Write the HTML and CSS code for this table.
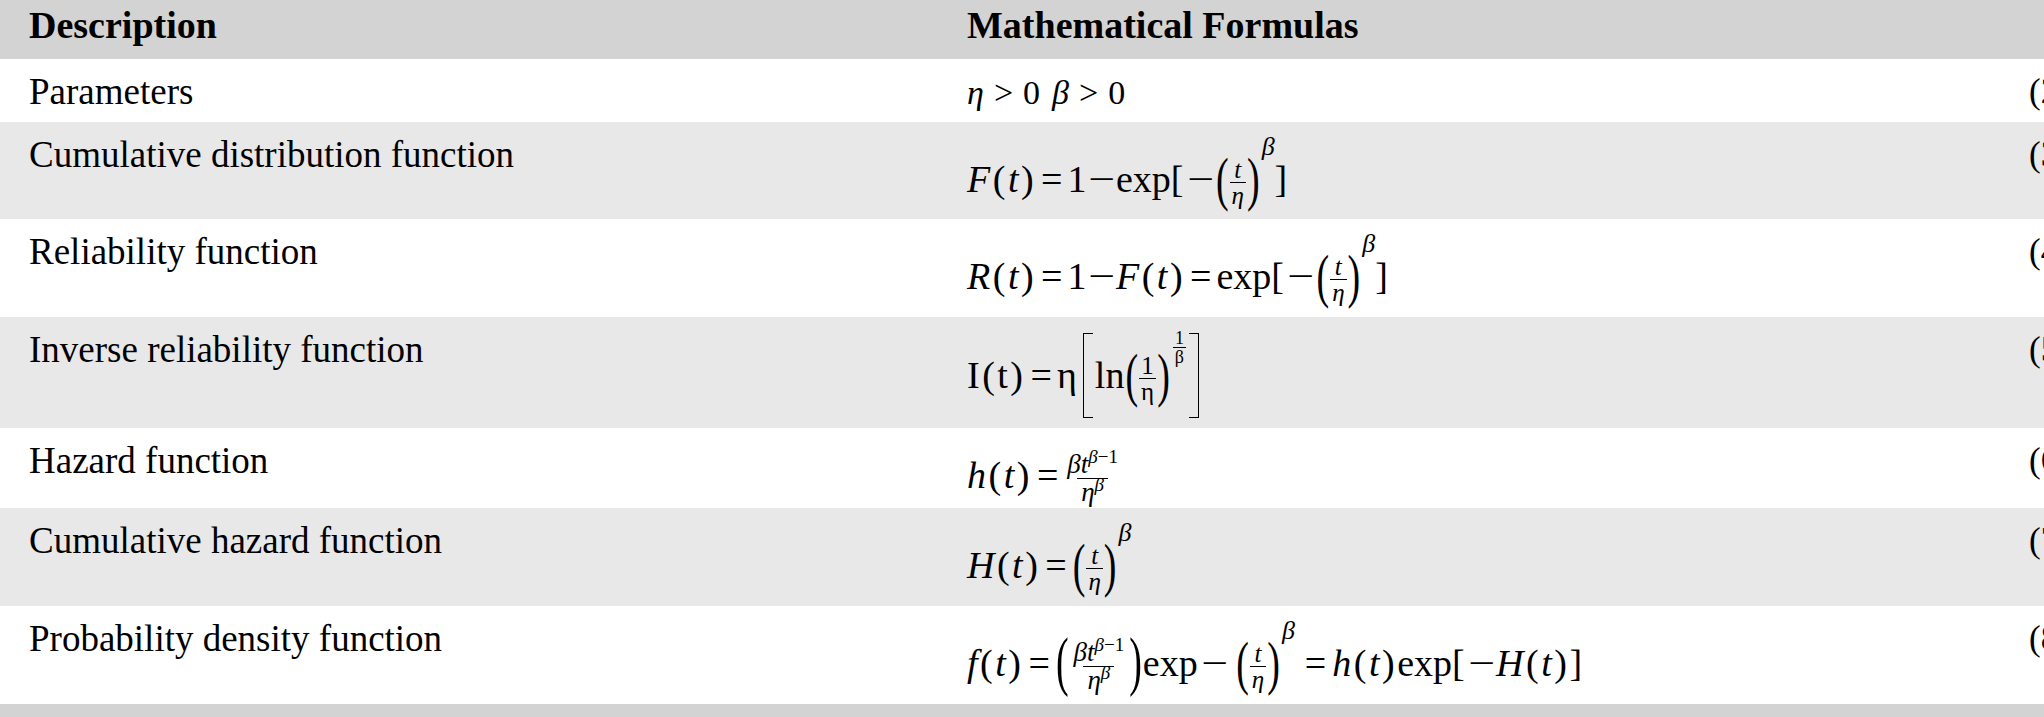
FILE: index.html
```html
<!DOCTYPE html>
<html lang="en">
<head>
<meta charset="utf-8">
<title>Weibull distribution – formulas</title>
<link rel="stylesheet" href="styles.css">
</head>
<body>
<div class="page">
  <table class="formulas">
    <colgroup>
      <col class="c-desc">
      <col class="c-math">
      <col class="c-num">
    </colgroup>
    <thead>
      <tr class="r-head">
        <th>Description</th>
        <th>Mathematical Formulas</th>
        <th></th>
      </tr>
    </thead>
    <tbody>
      <tr class="r1">
        <td>Parameters</td>
        <td><span class="plain"><i>η</i><span class="gt">&gt;</span>0<i class="sep">β</i><span class="gt">&gt;</span>0</span></td>
        <td class="eqno">(2)</td>
      </tr>
      <tr class="r2">
        <td>Cumulative distribution function</td>
        <td><span class="math m2"><span class="call"><i>F</i>(<i>t</i>)</span><span class="rel">=</span>1<span class="bin">−</span>exp[<span class="neg">−</span><span class="dl">(</span><span class="frac"><span class="fn"><i>t</i></span><span class="fd"><i>η</i></span></span><span class="dl">)</span><sup class="sup-hi"><i>β</i></sup>]</span></td>
        <td class="eqno">(3)</td>
      </tr>
      <tr class="r3">
        <td>Reliability function</td>
        <td><span class="math m3"><span class="call"><i>R</i>(<i>t</i>)</span><span class="rel">=</span>1<span class="bin">−</span><span class="call"><i>F</i>(<i>t</i>)</span><span class="rel">=</span>exp[<span class="neg">−</span><span class="dl">(</span><span class="frac"><span class="fn"><i>t</i></span><span class="fd"><i>η</i></span></span><span class="dl">)</span><sup class="sup-hi"><i>β</i></sup>]</span></td>
        <td class="eqno">(4)</td>
      </tr>
      <tr class="r4">
        <td>Inverse reliability function</td>
        <td><span class="math m4"><span class="call">I(t)</span><span class="rel">=</span>η<span class="brk brk-l"></span>ln<span class="dl">(</span><span class="frac"><span class="fn">1</span><span class="fd">η</span></span><span class="dl">)</span><sup class="sup-frac"><span class="frac frac-s"><span class="fn">1</span><span class="fd">β</span></span></sup><span class="brk brk-r"></span></span></td>
        <td class="eqno">(5)</td>
      </tr>
      <tr class="r5">
        <td>Hazard function</td>
        <td><span class="math m5"><span class="call"><i>h</i>(<i>t</i>)</span><span class="rel">=</span><span class="frac frac-l"><span class="fn"><i>β</i><i>t</i><sup class="sup-in"><i>β</i>−1</sup></span><span class="fd"><i>η</i><sup class="sup-in"><i>β</i></sup></span></span></span></td>
        <td class="eqno">(6)</td>
      </tr>
      <tr class="r6">
        <td>Cumulative hazard function</td>
        <td><span class="math m6"><span class="call"><i>H</i>(<i>t</i>)</span><span class="rel">=</span><span class="dl">(</span><span class="frac"><span class="fn"><i>t</i></span><span class="fd"><i>η</i></span></span><span class="dl">)</span><sup class="sup-hi"><i>β</i></sup></span></td>
        <td class="eqno">(7)</td>
      </tr>
      <tr class="r7">
        <td>Probability density function</td>
        <td><span class="math m7"><span class="call"><i>f</i>(<i>t</i>)</span><span class="rel">=</span><span class="dl dl-l">(</span><span class="frac frac-l"><span class="fn"><i>β</i><i>t</i><sup class="sup-in"><i>β</i>−1</sup></span><span class="fd"><i>η</i><sup class="sup-in"><i>β</i></sup></span></span><span class="dl dl-l">)</span>exp<span class="bin bin-wide">−</span><span class="dl">(</span><span class="frac"><span class="fn"><i>t</i></span><span class="fd"><i>η</i></span></span><span class="dl">)</span><sup class="sup-hi"><i>β</i></sup><span class="rel rel-wide">=</span><span class="call"><i>h</i>(<i>t</i>)</span>exp[<span class="neg">−</span><span class="call"><i>H</i>(<i>t</i>)</span>]</span></td>
        <td class="eqno">(8)</td>
      </tr>
    </tbody>
  </table>
  <div class="band"></div>
</div>
</body>
</html>
```

FILE: styles.css
```css
html, body {
  margin: 0;
  padding: 0;
  background: #ffffff;
}

body {
  overflow: hidden;
}

.page {
  width: 2044px;
  overflow: hidden;
}

.formulas {
  border-collapse: collapse;
  table-layout: fixed;
  width: 2240px;
  font-family: "Liberation Serif", "Times New Roman", serif;
  color: #000;
}

.c-desc { width: 938px; }
.c-math { width: 1062px; }
.c-num  { width: 240px; }

.formulas th,
.formulas td {
  text-align: left;
  vertical-align: top;
  padding: 12px 0 0 29px;
  font-size: 37px;
  line-height: 42px;
  white-space: nowrap;
}

.formulas th {
  font-size: 38px;
  font-weight: bold;
  padding-top: 4px;
  background: #d3d3d3;
}

.r-head { height: 59px; }
.r1 { height: 63px; }
.r2 { height: 97px; }
.r3 { height: 98px; }
.r4 { height: 111px; }
.r5 { height: 80px; }
.r6 { height: 98px; }
.r7 { height: 98px; }

.formulas tbody tr:nth-child(even) {
  background: #e8e8e8;
}

.formulas td.eqno {
  font-size: 35px;
}

.band {
  height: 20px;
  background: #d3d3d3;
}

/* ---------- inline math ---------- */

.plain {
  font-size: 34px;
}
.plain .gt {
  margin: 0 10px;
}
.plain .sep {
  margin-left: 12px;
}

.math {
  display: block;
  font-size: 38px;
  line-height: 1;
  white-space: nowrap;
}

.math i,
.plain i {
  font-style: italic;
}

.math .call {
  letter-spacing: 2.5px;
}

.math .rel {
  margin: 0 5px;
}

.math .rel-wide {
  margin: 0 6px 0 10px;
}

.math .bin,
.math .neg {
  display: inline-block;
  transform: scaleX(1.25);
}

.math .bin {
  margin: 0 4px;
}

.math .bin-wide {
  margin: 0 10px 0 6px;
}

.math .neg {
  margin: 0 4px 0 6px;
}

.dl {
  display: inline-block;
  transform: scaleY(1.55);
  transform-origin: 50% 50%;
  margin: 0 1px;
}

.dl-l {
  transform: scaleY(1.7);
  transform-origin: 50% 58%;
}

.frac {
  display: inline-flex;
  flex-direction: column;
  align-items: center;
  font-size: 25px;
  line-height: 1;
  vertical-align: 14px;
}

.frac .fn,
.frac .fd {
  padding: 0 2px;
  line-height: 1;
}

.frac .fd {
  border-top: 1.5px solid #000;
}

.frac-l {
  font-size: 27px;
  vertical-align: 14.6px;
}

.frac-l .fn,
.frac-l .fd {
  padding: 0 4px;
}

.frac-s {
  font-size: 18px;
  vertical-align: 10px;
}

.frac-s .fd {
  border-top-width: 1px;
}

.sup-hi {
  font-size: 26px;
  line-height: 1;
  vertical-align: 37px;
  margin-left: 1px;
}

.sup-in {
  font-size: 19px;
  line-height: 0;
  vertical-align: 10px;
}

.sup-frac {
  font-size: 18px;
  line-height: 1;
  vertical-align: 34px;
  margin-left: 2px;
}

.brk {
  display: inline-block;
  box-sizing: border-box;
  width: 10px;
  height: 85px;
  border: 1.7px solid #000;
  vertical-align: -30px;
}

.brk-l {
  border-right: none;
  margin: 0 2px 0 6px;
}

.brk-r {
  border-left: none;
  margin-left: 3px;
}

.m5 { padding-top: 11px; }
```
